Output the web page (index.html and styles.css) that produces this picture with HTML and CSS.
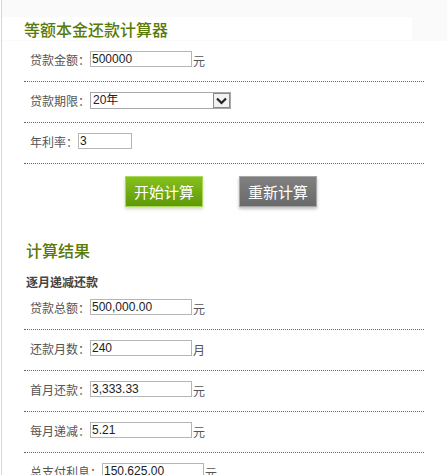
FILE: index.html
```html
<!DOCTYPE html>
<html lang="zh">
<head>
<meta charset="utf-8">
<link rel="stylesheet" href="styles.css">
</head>
<body>
<div class="page">
  <div class="header">
    <h1 class="title">等额本金还款计算器</h1>
  </div>
  <div class="form">
    <div class="row">
      <span class="label">贷款金额：</span><input class="field" type="text" value="500000"><span class="unit">元</span>
    </div>
    <div class="row">
      <span class="label">贷款期限：</span>
      <div class="select">
        <span class="select-value">20年</span>
        <span class="select-btn">
          <svg width="11" height="8" viewBox="0 0 11 8"><path d="M1 1.5 L5.5 6 L10 1.5" fill="none" stroke="#222" stroke-width="2.2"/></svg>
        </span>
      </div>
    </div>
    <div class="row">
      <span class="label">年利率：</span><input class="field short" type="text" value="3">
    </div>
    <div class="buttons">
      <button class="btn btn-green" type="button">开始计算</button>
      <button class="btn btn-gray" type="button">重新计算</button>
    </div>
    <h2 class="section-title">计算结果</h2>
    <h3 class="sub-title">逐月递减还款</h3>
    <div class="row">
      <span class="label">贷款总额：</span><input class="field" type="text" value="500,000.00"><span class="unit">元</span>
    </div>
    <div class="row">
      <span class="label">还款月数：</span><input class="field" type="text" value="240"><span class="unit">月</span>
    </div>
    <div class="row">
      <span class="label">首月还款：</span><input class="field" type="text" value="3,333.33"><span class="unit">元</span>
    </div>
    <div class="row">
      <span class="label">每月递减：</span><input class="field" type="text" value="5.21"><span class="unit">元</span>
    </div>
    <div class="row">
      <span class="label">总支付利息：</span><input class="field" type="text" value="150,625.00"><span class="unit">元</span>
    </div>
  </div>
</div>
</body>
</html>
```
FILE: styles.css
```css
html, body {
  margin: 0;
  padding: 0;
  background: #fff;
}
body {
  font-family: "Liberation Sans", "Noto Sans CJK SC", sans-serif;
  font-size: 12px;
  color: #555;
}
.page {
  margin-left: 1px;
  border-left: 1px solid #d8d8d8;
  min-height: 475px;
}
.header {
  height: 41px;
  background: #fafafa;
  padding-top: 17px;
  box-sizing: border-box;
}
.title {
  margin: 0;
  width: 410px;
  height: 23px;
  background: #fff;
  padding: 3px 0 0 22px;
  box-sizing: border-box;
  font-family: "Noto Sans CJK SC", sans-serif;
  font-size: 16px;
  line-height: 18px;
  font-weight: 500;
  color: #587a08;
}
.form {
  padding: 0 22px 0 22px;
  width: 400px;
}
.row {
  display: flex;
  align-items: flex-start;
  height: 41px;
  box-sizing: border-box;
  padding: 10px 0 0 6px;
  border-bottom: 1px dotted #666;
}
.label {
  font-family: "Noto Sans CJK SC", sans-serif;
  font-size: 12px;
  line-height: 17px;
  color: #555;
  white-space: nowrap;
}
.unit {
  font-family: "Noto Sans CJK SC", sans-serif;
  font-size: 12px;
  line-height: 17px;
  padding-top: 1px;
  color: #555;
}
.field {
  width: 102px;
  height: 16px;
  box-sizing: border-box;
  border: 1px solid #b5b5b5;
  padding: 0 1px;
  margin: 0 1px 0 0;
  font-family: "Liberation Sans", sans-serif;
  font-size: 12px;
  line-height: 14px;
  color: #222;
  background: #fff;
  outline: none;
}
.field.short {
  width: 54px;
}
.select {
  display: flex;
  width: 141px;
  height: 17px;
  box-sizing: border-box;
  border: 1px solid #a8a8a8;
  background: #fff;
}
.select-value {
  flex: 1;
  padding-left: 2px;
  font-family: "Liberation Sans", "Noto Sans CJK SC", sans-serif;
  font-size: 12px;
  line-height: 15px;
  color: #222;
}
.select-btn {
  width: 17px;
  height: 15px;
  box-sizing: border-box;
  border: 1px solid #8a8a8a;
  background: #f2f2f2;
  display: flex;
  align-items: center;
  justify-content: center;
}
.buttons {
  display: flex;
  padding: 12px 0 0 101px;
  gap: 36px;
  height: 31px;
}
.btn {
  width: 78px;
  height: 31px;
  padding: 0;
  margin: 0;
  font-family: "Noto Sans CJK SC", sans-serif;
  font-size: 15px;
  color: #fff;
  cursor: pointer;
}
.btn-green {
  border: 1px solid #a9d85a;
  background: linear-gradient(#86c01c, #5f9a08);
  box-shadow: 0 2px 3px rgba(120, 140, 60, 0.35);
}
.btn-gray {
  border: 1px solid #a6a6a6;
  background: linear-gradient(#808080, #6a6a6a);
  box-shadow: 0 2px 3px rgba(0, 0, 0, 0.25);
}
.section-title {
  margin: 33px 0 0 2px;
  font-family: "Noto Sans CJK SC", sans-serif;
  font-size: 16px;
  line-height: 20px;
  font-weight: 500;
  color: #587a08;
}
.sub-title {
  margin: 15px 0 0 2px;
  font-family: "Noto Sans CJK SC", sans-serif;
  font-size: 12px;
  line-height: 14px;
  font-weight: bold;
  color: #444;
}
.form .row:last-child {
  border-bottom: none;
}
```
